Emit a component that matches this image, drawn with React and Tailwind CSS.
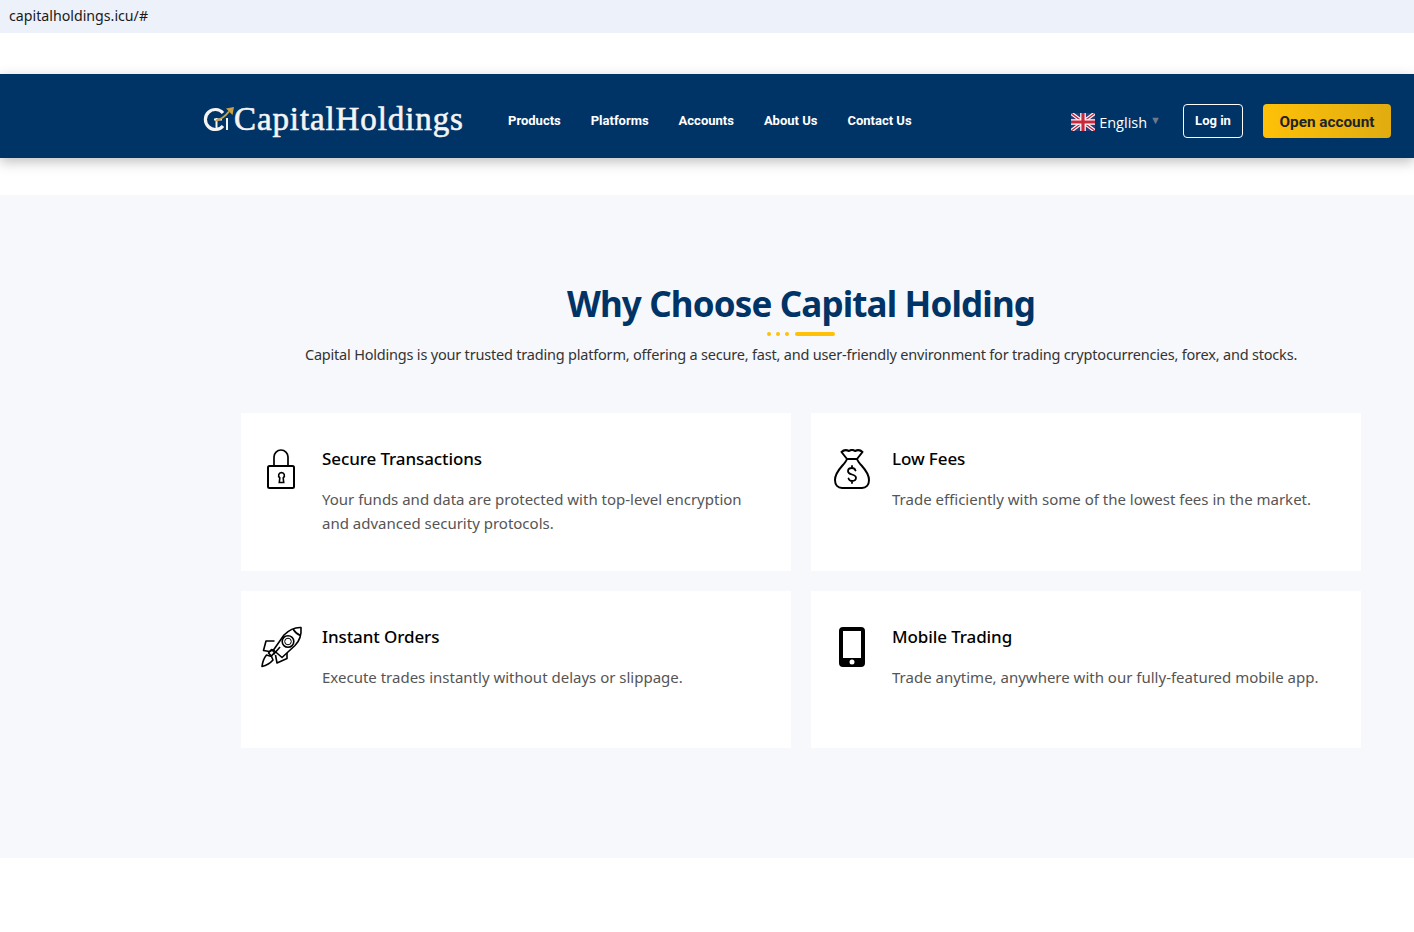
const navLinks = ["Products", "Platforms", "Accounts", "About Us", "Contact Us"];

function LockIcon() {
  return (
    <svg width="32" height="42" viewBox="0 1 32 42" fill="none" stroke="#000" strokeWidth="2">
      <path d="M9 18V9a7 7 0 0 1 14 0v9" strokeWidth="1.700" />
      <rect x="3" y="18" width="26" height="22" rx="1.500" />
      <path d="M16.500 24.500a3 3 0 0 1 1.700 5.400l.5 4.600h-4.400l.5-4.600a3 3 0 0 1 1.700-5.400Z" strokeWidth="1.600" />
    </svg>
  );
}

function MoneyBagIcon() {
  return (
    <svg width="38" height="42" viewBox="-1 1 38 42" fill="none" stroke="#000" strokeWidth="2" strokeLinejoin="round" strokeLinecap="round">
      <path d="M14 11 8.500 4C11 1.500 14 2 16 3c2-1.500 4-1.500 6 0 2-1 5-1.500 7.500 1L24 11Z" />
      <path d="M14 11C12 17 2 22 2 32c0 5 3 8 7 8h20c4 0 7-3 7-8 0-10-10-15-12-21" />
      <path d="M22.500 22.500C22 21 20.500 20 19 20c-2.500 0-4 1.300-4 3.200 0 4.300 8 2.300 8 6.600 0 1.900-1.500 3.200-4 3.200-1.500 0-3-1-3.500-2.500M19 18v2M19 33v2" strokeWidth="1.800" />
    </svg>
  );
}

function RocketIcon() {
  return (
    <svg width="42" height="40" viewBox="0 0 42 40" fill="none" stroke="#000" strokeWidth="1.600" strokeLinejoin="round" className="overflow-visible">
      <path d="M41 .500c.5 6-1 13-6 18L22 30.500 13.500 23 24 8C29 3 35 .200 41 .500Z" />
      <path d="M33 2c1.500 2.500 3.500 5 7.500 6.500" />
      <circle cx="28" cy="14.500" r="5.800" />
      <circle cx="28" cy="14.500" r="3.300" strokeWidth="1" />
      <path d="M14.500 14H6l-2.500 9.500 6 1 4-2" />
      <path d="M27 26v5.500L17 36l-1.500-8" />
      <path d="M20 20l-6.500 7.500" />
      <path d="M6.500 28C4 31 2.500 35 2 39.500c4-1 8-3 11-6.500l-1.500-3.500Z" />
      <path d="M11.500 22.500l3 3-3 3.500-3-3Z" />
    </svg>
  );
}

function PhoneIcon() {
  return (
    <svg width="26" height="40" viewBox="-1 0 26 40" className="overflow-visible">
      <path fillRule="evenodd" d="M4 0h18a4 4 0 0 1 4 4v32a4 4 0 0 1-4 4H4a4 4 0 0 1-4-4V4a4 4 0 0 1 4-4Zm0 4v27h18V4ZM13 32.500a2.500 2.500 0 1 0 0 5 2.500 2.500 0 0 0 0-5Z" />
    </svg>
  );
}

function UkFlag() {
  return (
    <svg width="24" height="18" viewBox="0 0 60 45">
      <rect width="60" height="45" fill="#2b3a78" />
      <path d="M0 0l60 45M60 0L0 45" stroke="#fff" strokeWidth="9" />
      <path d="M0 0l60 45M60 0L0 45" stroke="#c8283c" strokeWidth="3.500" />
      <path d="M30 0v45M0 22.500h60" stroke="#fff" strokeWidth="14" />
      <path d="M30 0v45M0 22.500h60" stroke="#c8283c" strokeWidth="8" />
    </svg>
  );
}

function LogoMark() {
  return (
    <svg width="31" height="29" viewBox="0 0 31 29" fill="none">
      <path d="M20 8A10 10 0 1 0 20 21" stroke="#f4f4f4" strokeWidth="3.200" />
      <path d="M11 14.500h8M13.500 13v11" stroke="#f4f4f4" strokeWidth="2" />
      <path d="M13 15.500c5-1 9-4 13-9" stroke="#c9a14a" strokeWidth="2" />
      <path d="M23 3.500 31 2l-1.500 8Z" fill="#c9a14a" />
      <path d="M24 13v12" stroke="#f4f4f4" strokeWidth="2" />
    </svg>
  );
}

function FeatureCard({ icon, title, children }) {
  return (
    <div className="flex h-[157.5px] bg-white pt-[32px]">
      <div className="flex w-[81px] shrink-0 justify-center pt-1 pr-[1px]">{icon}</div>
      <div className="pr-[30px]">
        <h3 className="text-[17px] leading-[28px] font-medium text-black font-['Noto_Sans',sans-serif] tracking-[-0.1px]">{title}</h3>
        <p className="mt-[14px] text-[15px] leading-[24px] text-[#555] font-['Noto_Sans',sans-serif]">{children}</p>
      </div>
    </div>
  );
}

export default function App() {
  return (
    <div className="min-h-[932px] bg-white font-['Roboto',sans-serif]">
      <div className="flex h-[33px] items-center bg-[#edf1f9] pb-[2px] pl-[9px] text-[14.200px] text-[#1a1a1a] font-['Noto_Sans',sans-serif]">
        capitalholdings.icu/#
      </div>

      <header className="relative mt-[41px] flex h-[84px] items-center bg-[#003366] shadow-[0_4px_12px_rgba(0,0,0,0.25)]">
        <div className="ml-[203px] flex w-[275px] items-center pt-[6px]">
          <LogoMark />
          <span className="text-[33px] leading-none text-[#f4f4f4] font-['Liberation_Serif',serif] tracking-[0.9px] [-webkit-text-stroke:0.6px_#f4f4f4]">CapitalHoldings</span>
        </div>
        <nav className="ml-[30px] flex gap-[30px] pt-[10px]">
          {navLinks.map((link) => (
            <a key={link} href="#" className="text-[13px] font-bold text-white">{link}</a>
          ))}
        </nav>
        <div className="ml-auto flex items-center pt-[10px] pr-[23px]">
          <div className="flex items-center pt-[2px]">
            <UkFlag />
            <span className="mt-[2px] ml-[4px] text-[14.500px] text-white font-['Open_Sans',sans-serif]">English</span>
            <span className="mt-[-1px] ml-[3px] text-[11px] text-[#6b7a8c]">▼</span>
          </div>
          <button className="ml-[22px] h-[34px] w-[60px] rounded-[4px] border border-white text-[13px] font-bold text-white">Log in</button>
          <button className="ml-[20px] h-[34px] w-[128px] rounded-[4px] bg-gradient-to-r from-[#ffc107] to-[#e0ac10] pt-[2px] text-[15.300px] font-bold text-[#1f2328]">Open account</button>
        </div>
      </header>

      <section className="mt-[37px] h-[663px] bg-[#f6f8fc] pt-[84px]">
        <div className="ml-[241px] w-[1120px]">
          <div className="flex flex-col items-center">
            <h2 className="text-[35px] leading-[50px] font-bold text-[#003366] font-['Noto_Sans',sans-serif] tracking-[-0.86px]">Why Choose Capital Holding</h2>
            <div className="mt-[3px] flex h-[4px] items-center gap-[5px]">
              <span className="h-[4px] w-[4px] rounded-full bg-[#ffc107]" />
              <span className="h-[4px] w-[4px] rounded-full bg-[#ffc107]" />
              <span className="h-[4px] w-[4px] rounded-full bg-[#ffc107]" />
              <span className="ml-[1px] h-[4px] w-[40px] rounded-full bg-[#ffc107]" />
            </div>
            <p className="mt-[4px] text-[14.500px] leading-[28px] text-[#333] font-['Noto_Sans',sans-serif] tracking-[-0.2px]">
              Capital Holdings is your trusted trading platform, offering a secure, fast, and user-friendly environment for trading cryptocurrencies, forex, and stocks.
            </p>
          </div>

          <div className="mt-[45px] grid grid-cols-2 gap-[20px]">
            <FeatureCard icon={<LockIcon />} title="Secure Transactions">
              Your funds and data are protected with top-level encryption and advanced security protocols.
            </FeatureCard>
            <FeatureCard icon={<MoneyBagIcon />} title="Low Fees">
              Trade efficiently with some of the lowest fees in the market.
            </FeatureCard>
            <FeatureCard icon={<RocketIcon />} title="Instant Orders">
              Execute trades instantly without delays or slippage.
            </FeatureCard>
            <FeatureCard icon={<PhoneIcon />} title="Mobile Trading">
              Trade anytime, anywhere with our fully-featured mobile app.
            </FeatureCard>
          </div>
        </div>
      </section>
    </div>
  );
}
